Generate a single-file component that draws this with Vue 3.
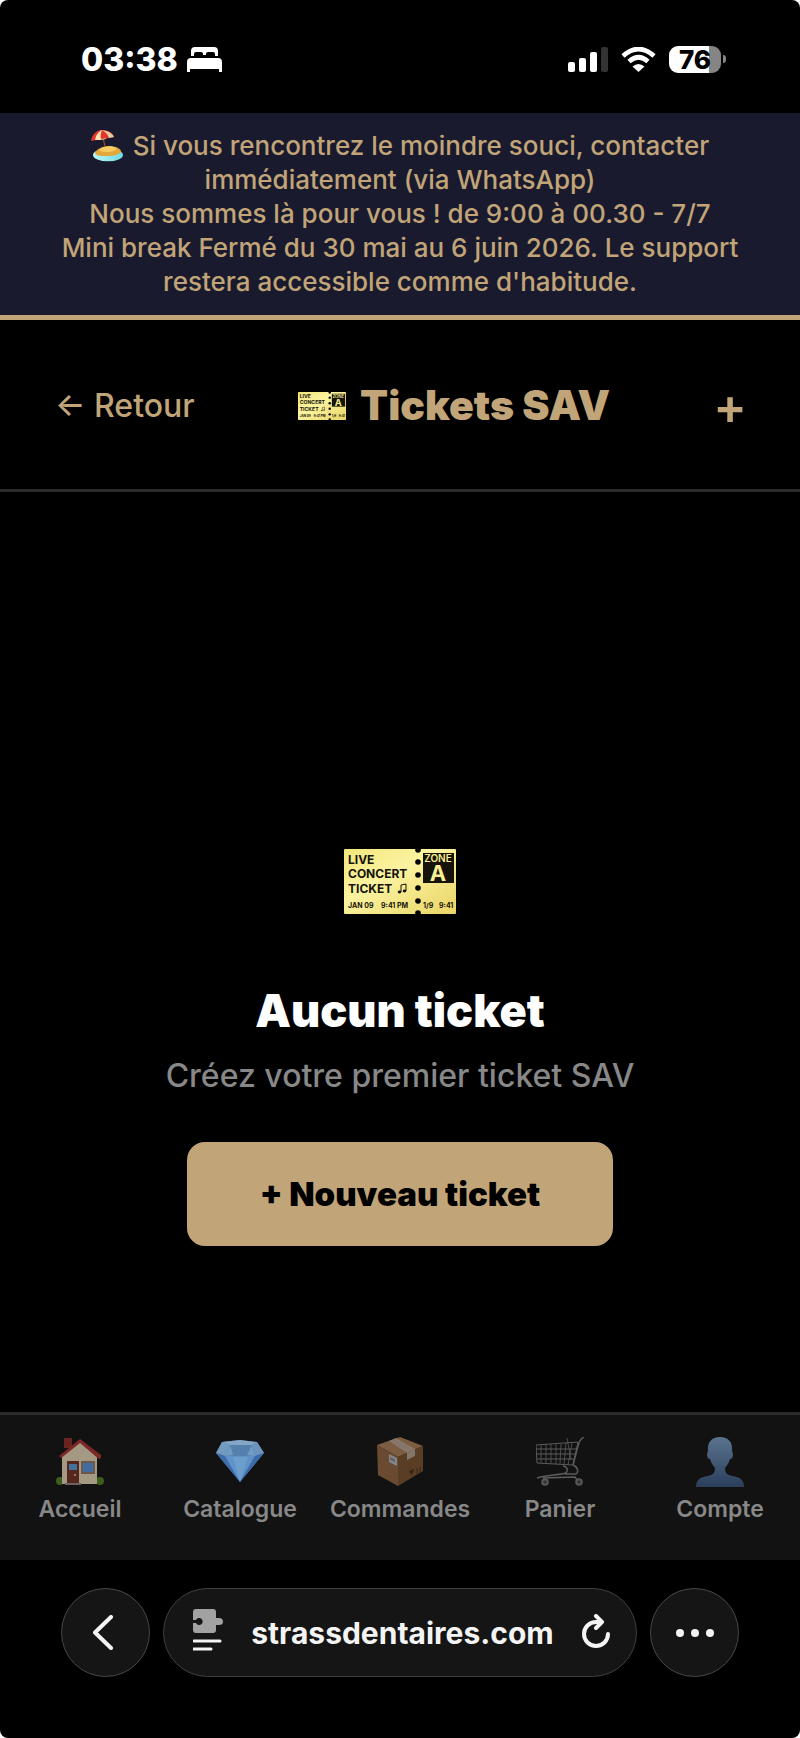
<script setup>
import { ref } from 'vue';

const notice = ref([
    'Nous sommes là pour vous ! de 9:00 à 00.30 - 7/7',
    "Mini break Fermé du 30 mai au 6 juin 2026. Le support restera accessible comme d'habitude."
]);

const tabs = ref([
    { label: 'Accueil', icon: 'house' },
    { label: 'Catalogue', icon: 'gem' },
    { label: 'Commandes', icon: 'parcel' },
    { label: 'Panier', icon: 'cart' },
    { label: 'Compte', icon: 'person' }
]);

const perforations = [1, 13, 26, 39, 52, 64];
</script>

<template>
    <div class="screen">
        <svg class="gradients" aria-hidden="true">
            <defs>
                <linearGradient id="paper" x1="0" y1="0" x2="1" y2="1">
                    <stop offset="0" stop-color="#f3e67d" />
                    <stop offset="0.4" stop-color="#fbf3a0" />
                    <stop offset="1" stop-color="#ead566" />
                </linearGradient>
                <linearGradient id="bust" x1="0" y1="0" x2="0" y2="1">
                    <stop offset="0" stop-color="#5b7390" />
                    <stop offset="1" stop-color="#2b3f5c" />
                </linearGradient>
                <linearGradient id="water" x1="0" y1="0" x2="1" y2="0">
                    <stop offset="0" stop-color="#b9f6f3" />
                    <stop offset="1" stop-color="#6fdbe8" />
                </linearGradient>
            </defs>
        </svg>

        <svg class="sprite" aria-hidden="true">
            <symbol id="ticket" viewBox="0 0 112 65">
                <rect width="112" height="65" rx="1" fill="url(#paper)" />
                <circle v-for="y in perforations" :key="y" cx="74" :cy="y" r="2.8" fill="#000" />
                <g font-family="Inter, sans-serif" fill="#15130a">
                    <g font-size="12" font-weight="700">
                        <text x="4" y="15">LIVE</text>
                        <text x="4" y="29">CONCERT</text>
                        <text x="4" y="44">TICKET</text>
                    </g>
                    <g font-size="7" font-weight="700">
                        <text x="4" y="59">JAN 09</text>
                        <text x="37" y="59">9:41 PM</text>
                        <text x="79" y="59">1/9</text>
                        <text x="95" y="59">9:41</text>
                    </g>
                    <rect x="79" y="4" width="31" height="30" />
                    <g fill="#f8ee92" text-anchor="middle">
                        <text x="94" y="13" font-size="10" font-weight="600">ZONE</text>
                        <text x="94" y="32" font-size="22" font-weight="700">A</text>
                    </g>
                </g>
                <g fill="#15130a">
                    <ellipse cx="55.5" cy="43" rx="1.8" ry="1.4" />
                    <ellipse cx="60.5" cy="42" rx="1.8" ry="1.4" />
                    <path d="M57 43V36l5-1v7" fill="none" stroke="#15130a" />
                </g>
            </symbol>
            <symbol id="beach" viewBox="0 0 32 32">
                <ellipse cx="17" cy="25" rx="15" ry="6.3" fill="url(#water)" />
                <path d="M4 23C5 20 10 16 18 16s13 4 12 6c-2 3-8 4-14 4S5 26 4 23z" fill="#e2a83c" />
                <path d="M9 19c3-3 12-4 16-1 2 2-5 4-9 4s-9-1-7-3z" fill="#f7cd62" />
                <path d="M12 7l2 10" stroke="#9b4a2b" stroke-width="1.2" />
                <path d="M0 11C1 4 6 0 11 0s11 2 12 7z" fill="#e2362b" />
                <path d="M4 10C5 5 7 2 11 0c3 3 4 5 4 9L9 10z" fill="#fbe3b4" />
                <path d="M10 9C9 5 10 3 11 0c4 2 6 5 7 8z" fill="#e2362b" />
                <path d="M11 0c5 1 9 2 12 7l-5 1C17 5 15 2 11 0z" fill="#dcd0a4" />
            </symbol>
            <symbol id="house" viewBox="0 0 48 50">
                <circle cx="4" cy="44" r="4" fill="#3c5d1c" />
                <circle cx="44" cy="44" r="4" fill="#3c5d1c" />
                <path d="M8 1h8v10H8z" fill="#6b241f" />
                <path d="M24 5L41 20V47H6V20z" fill="#a49a84" />
                <path d="M24 2L45 18v3l-2 1L24 6 5 21l-2-2z" fill="#7d2727" />
                <path d="M11 24h12v22H11z" fill="#54271a" />
                <path d="M13 27h8v6h-8z" fill="#456f9d" />
                <circle cx="19" cy="38" r="1" fill="#b39b70" />
                <path d="M25 24h14v13H25z" fill="#6d594a" />
                <path d="M27 26h10v9H27z" fill="#426ca1" />
                <path d="M9 46h16v2H9z" fill="#6b625d" />
            </symbol>
            <symbol id="gem" viewBox="0 0 48 50">
                <path d="M0 16L6 5l18-2 17 2 7 11-24 29z" fill="#4778b0" />
                <path d="M6 5l18-2 17 2-5 3H14z" fill="#83a7c5" />
                <path d="M0 16L6 5l8 3-5 11z" fill="#739bbd" />
                <path d="M41 5l7 11-9 3-3-11z" fill="#6c94bd" />
                <path d="M14 8h22l3 11H9z" fill="#5580ae" />
                <path d="M14 8L9 19l8-1zM36 8l-5 10 8 1z" fill="#6f9dc6" />
                <path d="M0 16l9 3 15 26z" fill="#3f6da9" />
                <path d="M9 19h15v26z" fill="#5e94c9" />
                <path d="M24 19h15L24 45z" fill="#5f92c5" />
                <path d="M48 16l-9 3-15 26z" fill="#3c6ba9" />
                <path d="M17 20l7 25 8-25z" fill="#82afd3" opacity="0.4" />
            </symbol>
            <symbol id="parcel" viewBox="0 0 48 50">
                <path d="M1 8L24 0l23 9-25 11z" fill="#7d5d41" />
                <path d="M1 8l21 12v29L2 38z" fill="#6a4b31" />
                <path d="M22 20L47 9v25L22 49z" fill="#593e24" />
                <path d="M13 4l7-3 19 11-8 4z" fill="#87776a" />
                <path d="M31 16l8-4v7l-8 4z" fill="#81776a" />
                <path d="M13 17l8 4v8l-8-4z" fill="#858589" />
                <path d="M14 20l5 2v3l-5-2z" fill="#60646c" />
                <path d="M33 35l3 3 2-5c-2-2-3-1-3 1-1-1-2 0-2 1z" fill="#352617" />
                <path d="M41 31v6M44 30v6" stroke="#352617" />
            </symbol>
            <symbol id="cart" viewBox="0 0 48 50">
                <g fill="none" stroke="#5d5b5d">
                    <path d="M0 8l42-3-5 23-36-2zM0 12h41M1 17h39M1 22h37" />
                    <path d="M5 8v18M10 7v19M15 7v19M20 7v20M25 7l-1 20M30 6l-2 21M36 6l-4 22M31 1l4 22" stroke-width="0.8" />
                    <path d="M48 0c-4 2-5 5-6 9l-5 19" stroke-width="1.5" />
                    <path d="M27 29c5 1 5 4 3 7-6 2-22 2-29 5M37 28c5 2 6 7 3 9H29M7 41l32-1 3 4" stroke-width="1.5" />
                </g>
                <g fill="#333" stroke="#5b5557" stroke-width="2">
                    <circle cx="9" cy="45" r="2.8" />
                    <circle cx="43" cy="45" r="2.8" />
                </g>
            </symbol>
            <symbol id="person" viewBox="0 0 48 50">
                <path d="M24 0c8 0 13 5 12 14l1 3c0 3-1 5-3 5-1 4-3 6-5 9 0 5 2 7 7 8 8 1 12 4 12 11H0c0-7 4-10 12-11 5-1 7-3 7-8-2-3-4-5-5-9-2 0-3-2-3-5l1-3C11 5 16 0 24 0z" fill="url(#bust)" />
            </symbol>
        </svg>

        <div class="status">
            <div class="status-group">
                <span class="time">03:38</span>
                <svg class="bed" viewBox="0 0 35 25" fill="#fff">
                    <path d="M4 9V4q0-4 4-4h19q4 0 4 4v5h-3V7q0-2-2-2h-5q-2 0-2 2v1h-3V7q0-2-2-2H9Q7 5 7 7v2zM4 11h27q4 0 4 4v10h-3v-3H3v3H0V15q0-4 4-4z" />
                </svg>
            </div>
            <div class="status-group indicators">
                <svg class="signal" viewBox="0 0 40 25">
                    <rect y="15" width="7" height="10" rx="2" fill="#fff" />
                    <rect x="11" y="11" width="7" height="14" rx="2" fill="#fff" />
                    <rect x="22" y="5" width="7" height="20" rx="2" fill="#fff" />
                    <rect x="33" width="7" height="25" rx="2" fill="#333" />
                </svg>
                <svg class="wifi" viewBox="0 0 35 25">
                    <path d="M2 9Q17.5-5 33 9M8 14.5q9.5-8.5 19 0" fill="none" stroke="#fff" stroke-width="4.6" />
                    <path d="M11.5 19.5q6-5 12 0l-6 5.5z" fill="#fff" />
                </svg>
                <div class="battery">
                    <span class="charge">76</span>
                    <span class="nub"></span>
                </div>
            </div>
        </div>

        <div class="notice">
            <p><svg class="beach"><use href="#beach" /></svg> Si vous rencontrez le moindre souci, contacter immédiatement (via WhatsApp)</p>
            <p v-for="line in notice" :key="line">{{ line }}</p>
        </div>

        <header class="header">
            <a class="back" href="#">← Retour</a>
            <h1 class="title"><svg class="title-ticket"><use href="#ticket" /></svg>Tickets SAV</h1>
            <button class="add" type="button" aria-label="Ajouter un ticket">+</button>
        </header>

        <main class="empty">
            <svg class="empty-ticket"><use href="#ticket" /></svg>
            <h2 class="empty-title">Aucun ticket</h2>
            <p class="empty-text">Créez votre premier ticket SAV</p>
            <button class="create" type="button">+ Nouveau ticket</button>
        </main>

        <nav class="tabs">
            <a v-for="tab in tabs" :key="tab.label" class="tab" href="#">
                <svg class="tab-icon"><use :href="'#' + tab.icon" /></svg>
                <span>{{ tab.label }}</span>
            </a>
        </nav>

        <div class="browser">
            <button class="round" type="button" aria-label="Page précédente">
                <svg class="chevron" viewBox="0 0 25 35">
                    <path d="M18 2L2 17.5 18 33" fill="none" stroke="#f4f4f4" stroke-width="4" stroke-linecap="round" stroke-linejoin="round" />
                </svg>
            </button>
            <div class="address">
                <button class="plain" type="button" aria-label="Extensions">
                    <svg class="puzzle" viewBox="0 0 30 48">
                        <path d="M3 0h17q3 0 3 3v6h3q4 0 4 3.5T26 16h-3v5q0 3-3 3H3q-3 0-3-3v-7h3a3.5 3.5 0 1 0 0-3H0V3q0-3 3-3z" fill="#a2a2a2" />
                        <path d="M1 32h26M1 40h17" stroke="#f4f4f4" stroke-width="3" stroke-linecap="round" />
                    </svg>
                </button>
                <button class="plain url" type="button">strassdentaires.com</button>
                <button class="plain" type="button" aria-label="Recharger">
                    <svg class="reload" viewBox="0 0 28 38" fill="none" stroke="#f4f4f4" stroke-width="4" stroke-linecap="round" stroke-linejoin="round">
                        <path d="M26 20A12 12 0 1 1 14 8h6M14 2l6 6-6 6" />
                    </svg>
                </button>
            </div>
            <button class="round" type="button" aria-label="Plus d'options">
                <svg class="dots" viewBox="0 0 38 8" fill="#f4f4f4">
                    <circle cx="4" cy="4" r="4" />
                    <circle cx="19" cy="4" r="4" />
                    <circle cx="34" cy="4" r="4" />
                </svg>
            </button>
        </div>
    </div>
</template>

<style>
body {
    background-color: #fff;
}
</style>

<style scoped>
.screen {
    display: flex;
    flex-direction: column;
    min-height: 100vh;
    background-color: #000;
    border-radius: 8px;
    color: #fff;
    font-family: Inter, "Liberation Sans", sans-serif;
}

.gradients {
    position: absolute;
    width: 0;
    height: 0;
}

.sprite {
    display: none;
}

h1,
h2,
p {
    margin: 0;
}

a {
    text-decoration: none;
}

button {
    margin: 0;
    padding: 0;
    border: none;
    background: none;
    font-family: inherit;
    cursor: pointer;
}

.status {
    display: flex;
    justify-content: space-between;
    align-items: center;
    padding: 43px 74px 38px 81px;
}

.status-group {
    display: flex;
    align-items: center;
    gap: 9px;
    height: 32px;
}

.indicators {
    gap: 13px;
}

.time {
    font-size: 32px;
    font-weight: 800;
}

.bed {
    width: 35px;
    height: 25px;
}

.signal {
    width: 40px;
    height: 25px;
}

.wifi {
    width: 35px;
    height: 25px;
}

.battery {
    display: flex;
    align-items: center;
    gap: 2px;
}

.charge {
    width: 52px;
    border-radius: 9px;
    background: linear-gradient(to right, #fff 76%, #858585 76%);
    color: #000;
    font-size: 26px;
    font-weight: 800;
    line-height: 27px;
    text-align: center;
}

.nub {
    width: 3px;
    height: 8px;
    border-radius: 0 4px 4px 0;
    background-color: #858585;
}

.notice {
    padding: 16px 56px;
    border-bottom: 5px solid #c1a578;
    background-color: #1a1a2e;
    color: #c1a578;
    font-size: 26px;
    font-weight: 500;
    line-height: 34px;
    text-align: center;
}

.beach {
    width: 32px;
    height: 32px;
    margin: -6px 3px -2px 0;
    vertical-align: middle;
}

.header {
    display: flex;
    justify-content: space-between;
    align-items: center;
    padding: 61px 53px 59px 55px;
    border-bottom: 3px solid #2a2a2a;
    color: #c1a578;
}

.back {
    color: inherit;
    font-size: 32px;
    font-weight: 500;
}

.title {
    display: flex;
    align-items: center;
    gap: 14px;
    font-size: 41px;
    font-weight: 900;
    line-height: 49px;
}

.title-ticket {
    width: 48px;
    height: 28px;
}

.add {
    color: inherit;
    font-size: 50px;
    font-weight: 600;
    line-height: 48px;
}

.empty {
    display: flex;
    flex: 1;
    flex-direction: column;
    align-items: center;
    padding: 357px 40px 40px;
}

.empty-ticket {
    width: 112px;
    height: 65px;
}

.empty-title {
    margin-top: 70px;
    font-size: 45px;
    font-weight: 900;
    line-height: 54px;
}

.empty-text {
    margin-top: 18px;
    color: #888;
    font-size: 32px;
    font-weight: 500;
    line-height: 40px;
}

.create {
    margin-top: 46px;
    padding: 32px 73px;
    border-radius: 18px;
    background-color: #c1a578;
    color: #000;
    font-size: 33px;
    font-weight: 900;
    line-height: 40px;
}

.tabs {
    display: grid;
    grid-template-columns: repeat(5, 1fr);
    padding: 22px 0 36px;
    border-top: 3px solid #2a2a2a;
    background-color: #121212;
}

.tab {
    display: flex;
    flex-direction: column;
    align-items: center;
    gap: 7px;
    color: #888;
    font-size: 23px;
    font-weight: 600;
    line-height: 30px;
}

.tab-icon {
    width: 48px;
    height: 50px;
}

.browser {
    display: flex;
    gap: 13px;
    padding: 28px 61px 61px;
}

.round {
    display: flex;
    flex: none;
    justify-content: center;
    align-items: center;
    box-sizing: border-box;
    width: 89px;
    height: 89px;
    border: 1px solid #484848;
    border-radius: 50%;
    background-color: #151515;
}

.address {
    display: flex;
    flex: 1;
    justify-content: space-between;
    align-items: center;
    padding: 0 26px 0 29px;
    border: 1px solid #404040;
    border-radius: 45px;
    background-color: #151515;
}

.plain {
    display: flex;
}

.url {
    color: #f4f4f4;
    font-size: 30px;
    font-weight: 700;
}

.chevron {
    width: 25px;
    height: 35px;
}

.puzzle {
    width: 30px;
    height: 48px;
}

.reload {
    width: 28px;
    height: 38px;
}

.dots {
    width: 38px;
    height: 8px;
}
</style>
